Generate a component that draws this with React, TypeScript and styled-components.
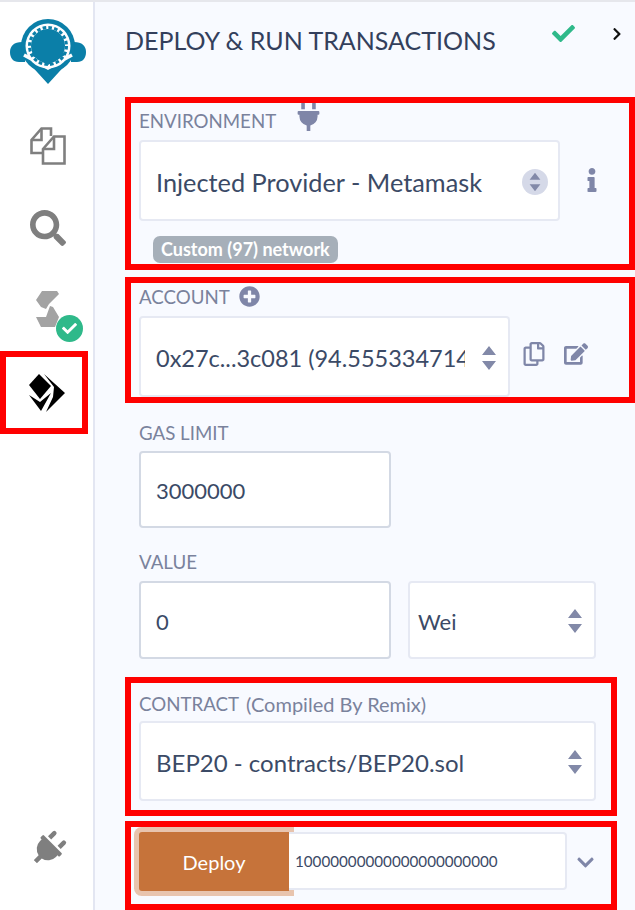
import React from 'react'
import styled, { createGlobalStyle } from 'styled-components'
import {
  FaCheck,
  FaChevronDown,
  FaChevronRight,
  FaEdit,
  FaInfo,
  FaPlug,
  FaPlusCircle,
  FaRegCopy,
  FaSearch,
} from 'react-icons/fa'

const GlobalStyle = createGlobalStyle`
  html, body {
    margin: 0;
    padding: 0;
    background: #fff;
  }
  * {
    box-sizing: border-box;
  }
`

const Page = styled.div`
  display: flex;
  width: 635px;
  height: 910px;
  overflow: hidden;
  border-top: 2px solid #e6e7ec;
  font-family: Lato, 'Noto Sans', sans-serif;
  color: #3b4a66;
`

const Sidebar = styled.nav`
  display: flex;
  flex-direction: column;
  flex: 0 0 95px;
  background: #fff;
  border-right: 2px solid #e3e6f2;
`

const LogoSlot = styled.div`
  display: flex;
  justify-content: center;
  height: 102px;
  padding: 17px 0 0 3px;
`

const NavSlot = styled.div<{ $height: number; $active?: boolean }>`
  position: relative;
  display: flex;
  align-items: center;
  justify-content: center;
  height: ${(p) => p.$height}px;
  color: #7f7f7f;
  font-size: 36px;
  ${(p) => p.$active && 'width: 88px; border: 6px solid #ff0000; padding-left: 5px;'}
  ${(p) => !p.$active && 'padding-left: 2px;'}
`

const PlugSlot = styled(NavSlot)`
  margin-top: auto;
  margin-bottom: 31px;
  font-size: 36px;
  svg {
    transform: rotate(45deg);
  }
`

const CheckBadge = styled.span`
  position: absolute;
  top: 47px;
  left: 56px;
  display: flex;
  align-items: center;
  justify-content: center;
  width: 27px;
  height: 27px;
  border-radius: 50%;
  background: #2fb98a;
  color: #fff;
  font-size: 15px;
`

const Panel = styled.main`
  flex: 1;
  min-width: 0;
  padding-left: 30px;
  background: #f8faff;
`

const Header = styled.header`
  display: flex;
  align-items: center;
  height: 95px;
  padding-bottom: 20px;
`

const Title = styled.h1`
  margin: 0;
  width: 427px;
  font-size: 25px;
  font-weight: 400;
  white-space: nowrap;
  color: #333f5c;
`

const GreenCheck = styled(FaCheck)`
  color: #2fb98a;
  font-size: 23px;
  margin-top: -12px;
`

const Collapse = styled(FaChevronRight)`
  color: #111;
  font-size: 14px;
  margin: -12px 0 0 35px;
`

const Marked = styled.section<{ $width: number; $height: number; $gap: number; $pad: number }>`
  width: ${(p) => p.$width}px;
  height: ${(p) => p.$height}px;
  margin-top: ${(p) => p.$gap}px;
  padding: ${(p) => p.$pad}px 0 0 8px;
  overflow: hidden;
  border: 6px solid #ff0000;
`

const Plain = styled.section<{ $gap: number }>`
  margin: ${(p) => p.$gap}px 0 0 14px;
`

const LabelRow = styled.div<{ $after: number }>`
  display: flex;
  align-items: center;
  gap: 7px;
  height: 20px;
  margin-bottom: ${(p) => p.$after}px;
`

const Label = styled.span`
  padding-top: 2px;
  font-size: 18.7px;
  color: #7a829c;
  white-space: nowrap;
`

const Note = styled.span`
  padding-top: 2px;
  font-size: 20px;
  color: #7a829c;
  white-space: nowrap;
`

const EnvPlug = styled(FaPlug)`
  color: #7f86a8;
  font-size: 29px;
  margin: -8px 0 0 11px;
`

const AddAccount = styled(FaPlusCircle)`
  color: #7f86a8;
  font-size: 21px;
  margin-left: 2px;
`

const Row = styled.div<{ $gap?: number }>`
  display: flex;
  gap: ${(p) => p.$gap ?? 0}px;
`

const Field = styled.div<{
  $width: number
  $height: number
  $size?: number
  $inset?: number
  $strong?: boolean
}>`
  display: flex;
  align-items: center;
  justify-content: space-between;
  flex: 0 0 ${(p) => p.$width}px;
  width: ${(p) => p.$width}px;
  height: ${(p) => p.$height}px;
  padding: 2px 12px 0 ${(p) => p.$inset ?? 15}px;
  background: #fff;
  border: 2px solid ${(p) => (p.$strong ? '#d3d9e4' : '#e6e9f3')};
  border-radius: 4px;
  font-size: ${(p) => p.$size ?? 22}px;
  color: #3b4a66;
  white-space: nowrap;
  overflow: hidden;
`

const Clipped = styled.span`
  display: block;
  width: 309px;
  overflow: hidden;
`

const Arrows = styled.svg`
  flex: none;
  width: 14px;
  height: 26px;
  fill: #8289a8;
`

const ArrowBadge = styled.span`
  display: flex;
  align-items: center;
  justify-content: center;
  flex: none;
  width: 26px;
  height: 26px;
  border-radius: 50%;
  background: #d5d9e8;
  margin-right: -2px;

  svg {
    width: 14px;
    height: 20px;
  }
`

const SideIcons = styled.div<{ $gap: number; $left: number; $top: number }>`
  display: flex;
  gap: ${(p) => p.$gap}px;
  margin: ${(p) => p.$top}px 0 0 ${(p) => p.$left}px;
  color: #7f86a8;
  font-size: 24px;
`

const Badge = styled.span`
  display: inline-block;
  height: 27px;
  margin: 15px 0 0 14px;
  padding: 0 8px;
  background: #a6afb9;
  border-radius: 7px;
  color: #fff;
  font-size: 18px;
  font-weight: 700;
  line-height: 27px;
  white-space: nowrap;
`

const DeployRow = styled.div`
  display: flex;
  align-items: flex-start;
`

const DeployButton = styled.button`
  flex: 0 0 150px;
  height: 59px;
  border: 0;
  border-radius: 3px 0 0 3px;
  background: #c6733a;
  box-shadow: 0 0 0 5px #e8c4ae;
  color: #fff;
  font-family: inherit;
  font-size: 20px;
`

const DeployArgs = styled.div`
  position: relative;
  display: flex;
  align-items: center;
  flex: 0 0 278px;
  height: 58px;
  padding-left: 6px;
  background: #fff;
  border: 2px solid #e6e9f3;
  border-left: 0;
  border-radius: 0 4px 4px 0;
  font-size: 15.2px;
  color: #3b4a66;
`

const Expand = styled(FaChevronDown)`
  color: #7f86a8;
  font-size: 19px;
  margin: 21px 0 0 9px;
`

const SortArrows = () => (
  <Arrows viewBox="0 0 14 26">
    <path d="M7 1l7 9H0zM0 16h14l-7 9z" />
  </Arrows>
)

const RemixLogo = () => (
  <svg width="76" height="66" viewBox="0 0 76 66">
    <g fill="#0b7fa8">
      <path d="M12 23h3v20H9C3 43 0 39 0 33c0-6 4-10 12-10zM64 23h-3v20h6c6 0 9-4 9-10 0-6-4-10-12-10z" />
      <circle cx="38" cy="27" r="27" />
      <path d="M17 42l21 10 21-10-21 23z" />
    </g>
    <circle cx="38" cy="27" r="22.5" fill="#fdfdfe" />
    <path d="M14 36l24 13 24-13" fill="none" stroke="#fdfdfe" strokeWidth="3.5" />
    <g fill="#0b7fa8">
      <circle cx="38" cy="27" r="17" />
      <path d="M21 36l17 10 17-10-4-6H25z" />
    </g>
    <circle
      cx="38"
      cy="27"
      r="18.5"
      fill="none"
      stroke="#0b7fa8"
      strokeWidth="3"
      strokeDasharray="3.6 2.2"
    />
  </svg>
)

const FilesIcon = () => (
  <svg width="36" height="38" viewBox="0 0 36 38" fill="none" stroke="#7f7f7f" strokeWidth="2.6">
    <path d="M21 9V1.5H11.5L1.5 13v13H13" />
    <path d="M11.5 1.5V13H1.5" />
    <path d="M13 22L24 9.5h10.5v27H13z" />
    <path d="M24 9.5V22H13" />
  </svg>
)

const SolidityIcon = () => (
  <svg width="25" height="37" viewBox="0 0 25 37" fill="#a3a3a3">
    <path d="M7 0h15l2 3-10 10-3 5-5-2-5-7z" />
    <path d="M15 15l3 1 6 10-4 10H6L1 26h10z" />
  </svg>
)

const DeployIcon = () => (
  <svg width="38" height="38" viewBox="0 0 38 38">
    <path d="M11 0L1 11l11 14 11-13z" />
    <path d="M1 21l11 7 11-9-10 18z" />
    <path d="M16 0l21 19-19 19 7-15 1-10z" />
  </svg>
)

export default function App() {
  return (
    <Page>
      <GlobalStyle />
      <Sidebar>
        <LogoSlot>
          <RemixLogo />
        </LogoSlot>
        <NavSlot $height={84}>
          <FilesIcon />
        </NavSlot>
        <NavSlot $height={80}>
          <FaSearch />
        </NavSlot>
        <NavSlot $height={83}>
          <SolidityIcon />
          <CheckBadge>
            <FaCheck />
          </CheckBadge>
        </NavSlot>
        <NavSlot $height={83} $active>
          <DeployIcon />
        </NavSlot>
        <PlugSlot $height={60}>
          <FaPlug />
        </PlugSlot>
      </Sidebar>

      <Panel>
        <Header>
          <Title>DEPLOY &amp; RUN TRANSACTIONS</Title>
          <GreenCheck />
          <Collapse />
        </Header>

        <Marked $width={510} $height={173} $gap={0} $pad={7}>
          <LabelRow $after={10}>
            <Label>ENVIRONMENT</Label>
            <EnvPlug />
          </LabelRow>
          <Row>
            <Field $width={421} $height={81} $size={25.3}>
              Injected Provider - Metamask
              <ArrowBadge>
                <SortArrows />
              </ArrowBadge>
            </Field>
            <SideIcons $gap={0} $left={20} $top={28}>
              <FaInfo />
            </SideIcons>
          </Row>
          <Badge>Custom (97) network</Badge>
        </Marked>

        <Marked $width={510} $height={126} $gap={7} $pad={3}>
          <LabelRow $after={10}>
            <Label>ACCOUNT</Label>
            <AddAccount />
          </LabelRow>
          <Row>
            <Field $width={371} $height={81} $size={23.5}>
              <Clipped>0x27c...3c081 (94.555334714</Clipped>
              <SortArrows />
            </Field>
            <SideIcons $gap={18} $left={12} $top={26}>
              <FaRegCopy />
              <FaEdit />
            </SideIcons>
          </Row>
        </Marked>

        <Plain $gap={19}>
          <LabelRow $after={9}>
            <Label>GAS LIMIT</Label>
          </LabelRow>
          <Field $width={252} $height={77} $strong>
            3000000
          </Field>
        </Plain>

        <Plain $gap={23}>
          <LabelRow $after={10}>
            <Label>VALUE</Label>
          </LabelRow>
          <Row $gap={17}>
            <Field $width={252} $height={78} $strong>
              0
            </Field>
            <Field $width={188} $height={78} $inset={8}>
              Wei
              <SortArrows />
            </Field>
          </Row>
        </Plain>

        <Marked $width={492} $height={139} $gap={18} $pad={10}>
          <LabelRow $after={8}>
            <Label>CONTRACT</Label>
            <Note>(Compiled By Remix)</Note>
          </LabelRow>
          <Field $width={457} $height={80} $size={24}>
            BEP20 - contracts/BEP20.sol
            <SortArrows />
          </Field>
        </Marked>

        <Marked $width={492} $height={89} $gap={5} $pad={5}>
          <DeployRow>
            <DeployButton>Deploy</DeployButton>
            <DeployArgs>10000000000000000000000</DeployArgs>
            <Expand />
          </DeployRow>
        </Marked>
      </Panel>
    </Page>
  )
}
